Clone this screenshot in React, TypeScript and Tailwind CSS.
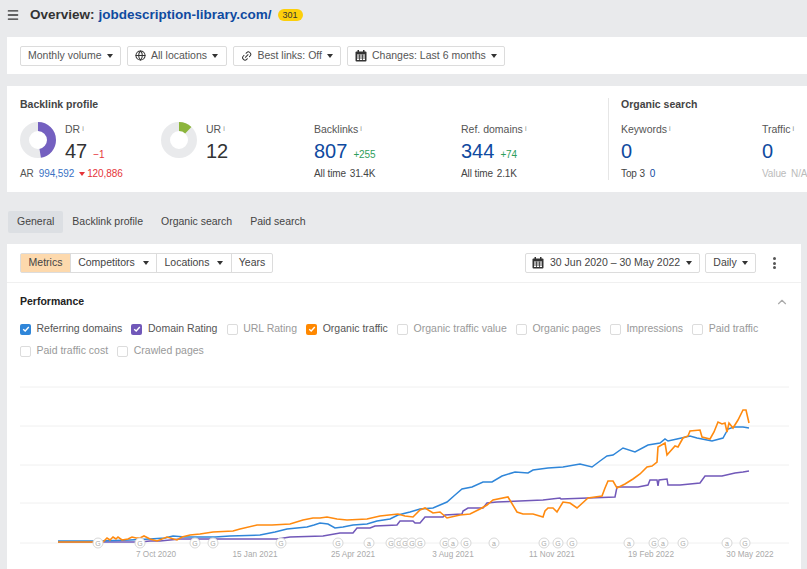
import { ChevronUp, Globe, Link2, Menu } from 'lucide-react';

const FONT = { fontFamily: '"Liberation Sans", Arial, sans-serif' };

const BLUE_LINE =
  '58,541 100,541 130,540 150,539 165,538 173,536 185,537 200,537 215,537 230,536 260,535 275,532 287,529 307,527 314,525 320,523 328,524 335,528 343,527 353,525 367,524 377,521 390,519 398,515 410,512 420,509 433,508 447,502 455,495 462,489 472,487 483,482 492,482 502,476 515,472 528,473 533,470 548,468 563,467 580,464 592,467 600,461 607,456 613,455 623,448 635,452 648,445 660,443 665,439 668,441 677,439 690,436 697,438 712,441 723,438 728,429 734,427 743,427 749,428';
const ORANGE_LINE =
  '58,542 103,542 107,538 110,540 113,537 116,539 118,537 122,540 128,539 132,537 136,538 140,538 144,536 150,539 157,541 167,537 177,540 182,537 190,535 200,534 213,532 233,531 240,529 257,525 272,525 290,524 303,520 313,518 320,518 327,517 337,519 347,520 367,519 380,516 398,514 405,516 413,517 420,510 425,508 433,513 440,512 447,518 460,515 470,514 480,509 487,505 493,500 508,497 517,512 523,514 533,514 543,517 545,511 548,508 553,508 557,512 563,502 570,503 577,508 588,498 602,496 605,488 608,481 613,481 617,488 625,484 633,479 640,474 647,467 652,466 657,462 658,447 665,443 667,455 675,446 678,447 683,438 688,436 690,431 700,430 702,437 710,439 714,432 718,422 722,424 725,423 727,432 729,423 733,428 738,420 743,410 746,410 749,423';
const PURPLE_LINE =
  '58,542 140,542 150,541 160,541 180,539 277,539 290,537 323,536 340,533 353,533 357,528 370,528 375,526 397,525 400,521 413,521 415,523 420,523 425,517 443,517 445,515 462,514 463,511 468,508 483,508 487,503 497,502 543,500 560,498 561,499 615,497 617,487 638,487 648,485 650,480 657,480 658,486 659,480 667,479 668,485 680,485 700,483 705,476 722,476 735,473 743,472 749,471';

const MARKERS: [number, string][] = [
  [98, 'G'], [140, 'G'], [195, 'G'], [213, 'G'], [281, 'G'], [338, 'G'], [369, 'a'], [391, 'G'], [399, 'G'],
  [405, 'G'], [412, 'G'], [420, 'G'], [445, 'G'], [453, 'a'], [466, 'G'], [494, 'a'], [544, 'G'], [558, 'G'],
  [572, 'G'], [629, 'a'], [654, 'G'], [663, 'a'], [683, 'G'], [727, 'a'], [745, 'G'],
];

const AXIS: [number, string][] = [
  [156, '7 Oct 2020'], [255, '15 Jan 2021'], [353, '25 Apr 2021'], [453, '3 Aug 2021'],
  [552, '11 Nov 2021'], [651, '19 Feb 2022'], [750, '30 May 2022'],
];

function Caret() {
  return <span className="inline-block h-0 w-0 shrink-0 border-x-[3.5px] border-t-[4px] border-x-transparent border-t-[#333]" />;
}

function CalendarIcon() {
  return (
    <svg width="12" height="12" viewBox="0 0 12 12" className="shrink-0">
      <rect x="0.5" y="1.5" width="11" height="10" rx="1" fill="#333" />
      <rect x="2.5" y="0" width="1.5" height="2.5" fill="#333" />
      <rect x="8" y="0" width="1.5" height="2.5" fill="#333" />
      <rect x="2" y="4.5" width="8" height="5.5" fill="#fff" />
      <path d="M2 6h8M2 8h8M4.5 4.5v5.5M7.5 4.5v5.5" stroke="#333" strokeWidth="0.8" />
    </svg>
  );
}

function FilterButton({ icon, label, className }: { icon?: React.ReactNode; label: string; className: string }) {
  return (
    <div className={`flex h-[20px] shrink-0 items-center gap-[5px] whitespace-nowrap rounded-[2px] border border-[#dcdcdc] px-[7px] text-[#555] ${className}`}>
      {icon}
      <span>{label}</span>
      <Caret />
    </div>
  );
}

function Info() {
  return <sup className="relative -top-[2px] ml-[2px] text-[7px] text-[#888]">i</sup>;
}

function Donut({ percent, color }: { percent: number; color: string }) {
  const r = 13.5;
  const c = 2 * Math.PI * r;
  return (
    <svg width="36" height="36" viewBox="0 0 36 36" className="shrink-0">
      <circle cx="18" cy="18" r={r} fill="none" stroke="#e9eaec" strokeWidth="9" />
      <circle
        cx="18"
        cy="18"
        r={r}
        fill="none"
        stroke={color}
        strokeWidth="9"
        strokeDasharray={`${(c * percent) / 100} ${c}`}
        transform="rotate(-90 18 18)"
      />
    </svg>
  );
}

function Stat({
  label,
  value,
  delta,
  sub,
  width,
}: {
  label: string;
  value: string;
  delta?: string;
  sub: React.ReactNode;
  width: string;
}) {
  return (
    <div className={`${width} shrink-0`}>
      <div className="h-[14px] leading-[14px] text-[#555]">
        {label}
        <Info />
      </div>
      <div className="mt-[3px] flex h-[24px] items-baseline gap-[6px]">
        <span className="text-[20px] leading-[24px] text-[#0f4aa0]">{value}</span>
        {delta && <span className="text-[10px] tracking-[-0.1px] text-[#2e9e5b]">{delta}</span>}
      </div>
      <div className="mt-[4px] h-[14px] whitespace-nowrap text-[10px] leading-[14px] tracking-[-0.1px] text-[#444]">{sub}</div>
    </div>
  );
}

function CheckItem({ label, color }: { label: string; color?: string }) {
  return (
    <div className="flex items-center gap-[5.5px]">
      {color ? (
        <span className={`flex h-[11px] w-[11px] items-center justify-center rounded-[2px] ${color}`}>
          <svg width="8" height="8" viewBox="0 0 8 8">
            <path d="M1.2 4.2 3.2 6 6.8 2" fill="none" stroke="#fff" strokeWidth="1.4" />
          </svg>
        </span>
      ) : (
        <span className="h-[11px] w-[11px] rounded-[2px] border border-[#dcdcdc]" />
      )}
      <span className={color ? 'text-[#555]' : 'text-[#999]'}>{label}</span>
    </div>
  );
}

function Chart() {
  return (
    <svg width="794" height="199" viewBox="7 370 794 199" className="mt-[8px] block">
      {[387, 426, 465, 503, 543].map((y) => (
        <line key={y} x1="20" x2="789" y1={y} y2={y} stroke="#f0f0f0" strokeWidth="1" />
      ))}
      <polyline points={PURPLE_LINE} fill="none" stroke="#7158b9" strokeWidth="1.5" />
      <polyline points={BLUE_LINE} fill="none" stroke="#2f86d9" strokeWidth="1.5" />
      <polyline points={ORANGE_LINE} fill="none" stroke="#ff8a0f" strokeWidth="1.6" />
      {MARKERS.map(([x, letter]) => (
        <g key={x}>
          <circle cx={x} cy="543" r="5" fill="#fff" stroke="#d8d8d8" />
          <text x={x} y="545.5" textAnchor="middle" fontSize="7" fill="#aaa">
            {letter}
          </text>
        </g>
      ))}
      {AXIS.map(([x, label]) => (
        <text key={x} x={x} y="557" textAnchor="middle" fontSize="8.2" fill="#aaa">
          {label}
        </text>
      ))}
    </svg>
  );
}

export default function App() {
  return (
    <div style={FONT} className="flex h-[569px] w-[807px] flex-col overflow-hidden bg-[#e9eaec] text-[10.5px]">
      {/* Header */}
      <div className="flex h-[37px] shrink-0 items-center pb-[7px] pl-[6px]">
        <Menu size={14} strokeWidth={2.2} color="#333" />
        <span className="ml-[10px] text-[13.5px] font-bold text-[#333]">Overview:</span>
        <span className="ml-[4px] text-[13.5px] font-bold text-[#0f4aa0]">jobdescription-library.com/</span>
        <span className="ml-[6px] rounded-full bg-[#fccf0a] px-[5px] text-[9px] leading-[12px] text-[#333]">301</span>
      </div>

      {/* Filters */}
      <div className="ml-[7px] flex h-[37px] shrink-0 items-center gap-[6px] bg-white pl-[13px]">
        <FilterButton label="Monthly volume" className="w-[101px]" />
        <FilterButton icon={<Globe size={11} color="#333" strokeWidth={2.2} />} label="All locations" className="w-[100px]" />
        <FilterButton icon={<Link2 size={12} color="#333" strokeWidth={2} className="-rotate-45" />} label="Best links: Off" className="w-[108px]" />
        <FilterButton icon={<CalendarIcon />} label="Changes: Last 6 months" className="w-[158px]" />
      </div>

      {/* Backlink profile */}
      <div className="ml-[7px] mt-[12px] flex h-[106px] shrink-0 overflow-hidden bg-white pl-[13px] pt-[12px]">
        <div className="w-[588px] shrink-0">
          <div className="h-[13px] font-bold leading-[13px] text-[#444]">Backlink profile</div>
          <div className="mt-[11px] flex">
            <div className="w-[141px] shrink-0">
              <div className="flex">
                <Donut percent={47} color="#7460c0" />
                <div className="ml-[9px]">
                  <div className="h-[14px] leading-[14px] text-[#555]">
                    DR
                    <Info />
                  </div>
                  <div className="mt-[3px] flex h-[24px] items-baseline gap-[6px]">
                    <span className="text-[20px] leading-[24px] text-[#333]">47</span>
                    <span className="text-[10px] text-[#e5343a]">−1</span>
                  </div>
                </div>
              </div>
              <div className="mt-[4px] flex h-[14px] items-center whitespace-nowrap text-[10px] leading-[14px] tracking-[-0.1px]">
                <span className="text-[#555]">AR</span>
                <span className="ml-[5px] text-[#3a72c4]">994,592</span>
                <span className="ml-[5px] mr-[2px] h-0 w-0 border-x-[3px] border-t-[4px] border-x-transparent border-t-[#e5343a]" />
                <span className="text-[#e5343a]">120,886</span>
              </div>
            </div>
            <div className="flex w-[153px] shrink-0">
              <Donut percent={12} color="#8cb53c" />
              <div className="ml-[9px]">
                <div className="h-[14px] leading-[14px] text-[#555]">
                  UR
                  <Info />
                </div>
                <div className="mt-[3px] h-[24px] text-[20px] leading-[24px] text-[#333]">12</div>
              </div>
            </div>
            <Stat
              label="Backlinks"
              value="807"
              delta="+255"
              sub={
                <span>
                  All time <span className="ml-[1px]">31.4K</span>
                </span>
              }
              width="w-[147px]"
            />
            <Stat
              label="Ref. domains"
              value="344"
              delta="+74"
              sub={
                <span>
                  All time <span className="ml-[1px]">2.1K</span>
                </span>
              }
              width="w-[147px]"
            />
          </div>
        </div>
        <div className="mb-[12px] w-[192px] shrink-0 border-l border-[#e6e6e6] pl-[12px]">
          <div className="h-[13px] font-bold leading-[13px] text-[#444]">Organic search</div>
          <div className="mt-[11px] flex">
            <Stat
              label="Keywords"
              value="0"
              sub={
                <span>
                  Top 3 <span className="ml-[2px] text-[#0f4aa0]">0</span>
                </span>
              }
              width="w-[141px]"
            />
            <Stat
              label="Traffic"
              value="0"
              sub={
                <span className="text-[#bbb]">
                  Value <span className="ml-[2px]">N/A</span>
                </span>
              }
              width="w-[60px]"
            />
          </div>
        </div>
      </div>

      {/* Tabs */}
      <div className="ml-[8px] mt-[18px] flex h-[22px] shrink-0 items-center pt-[1px] text-[#444]">
        <div className="flex h-[22px] items-center rounded-[2px] bg-[#dcdfe3] px-[9px] pt-[1px]">General</div>
        <div className="px-[9px]">Backlink profile</div>
        <div className="px-[9px]">Organic search</div>
        <div className="px-[9px]">Paid search</div>
      </div>

      {/* Chart card */}
      <div className="ml-[7px] mt-[12px] w-[794px] flex-1 bg-white">
        <div className="flex h-[39px] items-center border-b border-[#f0f0f0] pl-[13px]">
          <div className="flex h-[20px] items-stretch rounded-[2px] border border-[#dcdcdc] text-[#444]">
            <div className="flex w-[49px] items-center justify-center bg-[#fdd9ad]">Metrics</div>
            <div className="flex w-[86px] items-center justify-center gap-[8px] border-l border-[#dcdcdc]">
              Competitors
              <Caret />
            </div>
            <div className="flex w-[75px] items-center justify-center gap-[8px] border-l border-[#dcdcdc]">
              Locations
              <Caret />
            </div>
            <div className="flex w-[41px] items-center justify-center border-l border-[#dcdcdc]">Years</div>
          </div>
          <div className="ml-auto flex h-[20px] w-[175px] items-center gap-[6px] rounded-[2px] border border-[#dcdcdc] pl-[6px] text-[#444]">
            <CalendarIcon />
            <span>30 Jun 2020 – 30 May 2022</span>
            <Caret />
          </div>
          <div className="ml-[5px] flex h-[20px] w-[51px] items-center justify-center gap-[5px] rounded-[2px] border border-[#dcdcdc] text-[#444]">
            Daily
            <Caret />
          </div>
          <div className="ml-[17px] mr-[25px] flex flex-col gap-[1.5px]">
            <span className="h-[3px] w-[3px] rounded-full bg-[#555]" />
            <span className="h-[3px] w-[3px] rounded-full bg-[#555]" />
            <span className="h-[3px] w-[3px] rounded-full bg-[#555]" />
          </div>
        </div>
        <div className="mt-[11px] flex h-[16px] items-center justify-between pl-[13px] pr-[12px]">
          <span className="text-[10.5px] font-bold text-[#222]">Performance</span>
          <ChevronUp size={14} color="#aaa" />
        </div>
        <div className="mt-[8px] flex h-[22px] items-center gap-[9.2px] pl-[13px]">
          <CheckItem label="Referring domains" color="bg-[#2f86d9]" />
          <CheckItem label="Domain Rating" color="bg-[#7158b9]" />
          <CheckItem label="URL Rating" />
          <CheckItem label="Organic traffic" color="bg-[#ff8800]" />
          <CheckItem label="Organic traffic value" />
          <CheckItem label="Organic pages" />
          <CheckItem label="Impressions" />
          <CheckItem label="Paid traffic" />
        </div>
        <div className="flex h-[22px] items-center gap-[9.2px] pl-[13px]">
          <CheckItem label="Paid traffic cost" />
          <CheckItem label="Crawled pages" />
        </div>
        <Chart />
      </div>
    </div>
  );
}
